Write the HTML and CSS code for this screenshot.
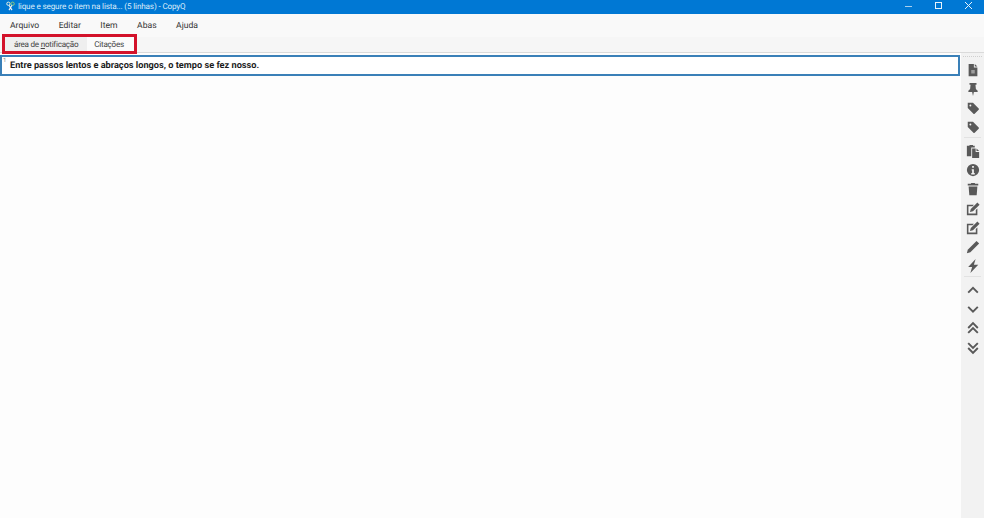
FILE: index.html
```html
<!DOCTYPE html>
<html lang="pt-BR">
<head>
<meta charset="utf-8">
<title>CopyQ</title>
<link rel="stylesheet" href="styles.css">
</head>
<body>
<div class="window">
  <header class="titlebar">
    <svg class="app-icon" viewBox="0 0 12 12"><circle cx="3.2" cy="3" r="2.2" fill="none" stroke="#e8f0e0" stroke-width="1.300"/><circle cx="8.8" cy="3" r="2.2" fill="none" stroke="#8fcf7a" stroke-width="1.300"/><path d="M4 5l4 6.500M8 5l-4 6.500" stroke="#f2f2f2" stroke-width="1.500"/></svg>
    <span class="title">lique e segure o item na lista... (5 linhas) - CopyQ</span>
    <div class="controls">
      <svg class="ctl" viewBox="0 0 10 10"><path d="M1 5.5h7" stroke="#a9d0ee" stroke-width="1"/></svg>
      <svg class="ctl" viewBox="0 0 10 10"><rect x="1.5" y="1.5" width="6" height="6" fill="none" stroke="#e8f3fb" stroke-width="1"/></svg>
      <svg class="ctl" viewBox="0 0 10 10"><path d="M1 1l7 7M8 1l-7 7" stroke="#e8f3fb" stroke-width="1"/></svg>
    </div>
  </header>
  <nav class="menubar">
    <span class="menu-item">Arquivo</span>
    <span class="menu-item">Editar</span>
    <span class="menu-item">Item</span>
    <span class="menu-item">Abas</span>
    <span class="menu-item">Ajuda</span>
  </nav>
  <div class="tabbar">
    <div class="tabs">
      <span class="tab">área de&nbsp;<u>n</u>otificação</span>
      <span class="tab tab-active">Citações</span>
    </div>
  </div>
  <main class="content">
    <section class="list">
      <div class="row"><span class="row-num">1</span><strong class="row-text">Entre passos lentos e abraços longos, o tempo se fez nosso.</strong></div>
    </section>
    <aside class="toolbar">
      <div class="grip"></div>
      <svg class="ic" viewBox="0 0 16 16"><path d="M3 1h6v4h4v10H3zM10 1l3 3h-3z"/><rect x="6" y="8" width="4" height="4" fill="#f0f0f0" opacity=".45"/></svg>
      <svg class="ic" viewBox="0 0 16 16"><path d="M4 1h8v2h-1.2l.5 5 2 2v1.500H9L8 16l-1-4.500H2.700V10l2-2 .5-5H4z"/></svg>
      <svg class="ic" viewBox="0 0 16 16"><path d="M2 2h6l6.500 6.500a1 1 0 0 1 0 1.400l-4.600 4.600a1 1 0 0 1-1.400 0L2 8zM5 4a1 1 0 1 0 0 2.200A1 1 0 0 0 5 4z" fill-rule="evenodd"/></svg>
      <svg class="ic" viewBox="0 0 16 16"><path d="M2 2h6l6.500 6.500a1 1 0 0 1 0 1.400l-4.600 4.600a1 1 0 0 1-1.400 0L2 8zM5 4a1 1 0 1 0 0 2.200A1 1 0 0 0 5 4z" fill-rule="evenodd"/></svg>
      <div class="sep"></div>
      <svg class="ic" viewBox="0 0 16 16"><path d="M1 2h3V1h4v1h2v2H6v10H1z"/><path d="M7 5h4v4h4v7H7zM12 5l3 3h-3z"/></svg>
      <svg class="ic" viewBox="0 0 16 16"><path d="M8 1a7 7 0 1 0 0 14A7 7 0 0 0 8 1zM7 3.500h2v2H7zM6.500 7H9v4.500h1V13H6v-1.500h1V8.500h-.5z" fill-rule="evenodd"/></svg>
      <svg class="ic" viewBox="0 0 16 16"><path d="M6 1h4l.5 1H14v2H2V2h3.500zM3 5h10l-.8 10H3.800z"/></svg>
      <svg class="ic" viewBox="0 0 16 16"><path d="M1 3h8L7.500 4.800H2.800v8.400h8.400V9L13 7.500V15H1z"/><path d="M13 .5l2.500 2.500L8 10.500l-3.500 1 1-3.500z"/></svg>
      <svg class="ic" viewBox="0 0 16 16"><path d="M1 3h8L7.500 4.800H2.800v8.400h8.400V9L13 7.500V15H1z"/><path d="M13 .5l2.500 2.500L8 10.500l-3.500 1 1-3.500z"/></svg>
      <svg class="ic" viewBox="0 0 16 16"><path d="M12 1l3 3L5 14l-4 1 1-4z"/></svg>
      <svg class="ic" viewBox="0 0 16 16"><path d="M11 0L2.500 9H7l-2 7 9-9.500H9z"/></svg>
      <div class="sep"></div>
      <svg class="ic" viewBox="0 0 16 16"><path class="line" d="M2.500 11l5.500-5.500 5.500 5.500"/></svg>
      <svg class="ic" viewBox="0 0 16 16"><path class="line" d="M2.500 5.500l5.500 5.500 5.500-5.500"/></svg>
      <svg class="ic" viewBox="0 0 16 16"><path class="line" d="M2.500 8l5.500-5.500 5.500 5.500M2.500 13.500l5.500-5.500 5.500 5.500"/></svg>
      <svg class="ic" viewBox="0 0 16 16"><path class="line" d="M2.500 2.500l5.500 5.500 5.500-5.500M2.500 8l5.500 5.500 5.500-5.500"/></svg>
    </aside>
  </main>
</div>
</body>
</html>
```
FILE: styles.css
```css
* { box-sizing: border-box; }
html, body { margin: 0; height: 100%; }
body { font-family: Roboto, "Open Sans", sans-serif; color: #222; background: #fcfcfc; overflow: hidden; text-rendering: geometricPrecision; }
.window { display: flex; flex-direction: column; height: 518px; }
.titlebar { height: 14px; background: #0078d4; color: #dcecf9; display: flex; align-items: center; padding: 0 0 3px 6px; flex: none; }
.app-icon { width: 9px; height: 10px; margin-right: 3px; flex: none; }
.title { font-size: 8.100px; letter-spacing: -0.14px; white-space: nowrap; }
.controls { margin-left: auto; display: flex; align-items: center; gap: 20px; padding-right: 10px; }
.ctl { width: 10px; height: 10px; display: block; }
.menubar { height: 23px; background: #f9f9f9; display: flex; align-items: center; padding: 0 0 0 10px; gap: 19.500px; font-size: 8.600px; color: #333; flex: none; }
.tabbar { height: 16px; background: #f6f6f6; flex: none; padding-left: 2px; border-bottom: 1px solid #dadada; }
.tabs { width: 135px; height: 20px; border: 3px solid #d3122a; display: flex; align-items: stretch; font-size: 8.100px; letter-spacing: -0.25px; position: relative; top: -3px; background: #efefef; }
.tab { display: flex; align-items: center; padding: 0 9px; color: #444; white-space: nowrap; }
.tab-active { background: #fbfbfb; padding: 0 0 0 7px; flex: 1; }
.content { flex: 1; display: flex; min-height: 0; }
.list { flex: 1; padding: 2px 1px 0 0; background: #fdfdfd; }
.row { height: 21px; border: 2px solid #3a80b8; display: flex; align-items: center; padding: 0 0 1px 8px; position: relative; background: #fff; }
.row-num { position: absolute; left: 1px; top: 0; font-size: 6px; color: #888; line-height: 7px; }
.row-text { font-size: 9.200px; font-weight: 700; color: #1c1c1c; white-space: nowrap; }
.toolbar { width: 23px; background: #f2f2f2; display: flex; flex-direction: column; align-items: center; padding-top: 3px; flex: none; }
.grip { width: 19px; height: 1px; border-top: 1px dotted #cfcfcf; margin-bottom: 3px; }
.ic { width: 14px; height: 14px; margin: 2.650px 0; fill: #595959; display: block; flex: none; }
.line { fill: none; stroke: #595959; stroke-width: 2.200; }
.sep { width: 17px; height: 1px; background: #e2e2e2; margin: 0 0 3px; flex: none; }
```
